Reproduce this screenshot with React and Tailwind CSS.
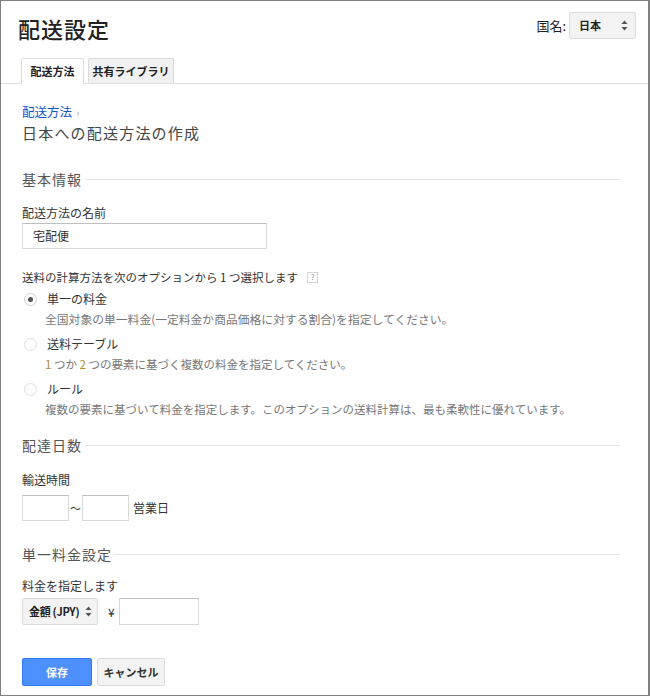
import React from "react";

const FONT = { fontFamily: '"Noto Sans CJK JP", "Noto Sans", sans-serif' };

function Arrows({ className = "" }) {
  return (
    <svg width="7" height="11" viewBox="0 0 7 11" className={className}>
      <path d="M3.5 0.5 L6.5 4 L0.5 4 Z" fill="#555" />
      <path d="M3.5 10.5 L6.5 7 L0.5 7 Z" fill="#555" />
    </svg>
  );
}

function Section({ title, className = "" }) {
  return (
    <div className={"flex items-center " + className}>
      <span className="text-[14px] leading-[20px] tracking-[1px] text-[#555]">{title}</span>
      <div className="ml-[3px] flex-1 border-t border-[#e5e5e5]" />
    </div>
  );
}

function Radio({ checked }) {
  return (
    <span
      className={
        "flex h-[13px] w-[13px] shrink-0 items-center justify-center rounded-full border bg-white " +
        (checked ? "border-[#d0d0d0]" : "border-[#e0e0e0]")
      }
    >
      {checked && <span className="h-[5px] w-[5px] rounded-full bg-[#555]" />}
    </span>
  );
}

function Option({ checked, label, desc, className = "", descClass = "text-[11.5px]" }) {
  return (
    <div className={className}>
      <div className="flex items-center">
        <span className="ml-[2px] flex w-[23px]">
          <Radio checked={checked} />
        </span>
        <span className="text-[12px] leading-[18px] text-[#333]">{label}</span>
      </div>
      <div className={"mt-[2px] pl-[23px] leading-[18px] text-[#777] " + descClass}>{desc}</div>
    </div>
  );
}

export default function App() {
  return (
    <div style={FONT} className="h-[696px] w-[650px] overflow-hidden border border-r-2 border-[#808080] bg-white text-[#333]">
      {/* Header */}
      <div className="border-b border-[#e0e0e0]">
        <div className="flex items-start justify-between pr-[12px] pt-[11px]">
          <h1 className="ml-[17px] mt-[2px] text-[22px] font-medium leading-[28px] tracking-[1px] text-[#222]">配送設定</h1>
          <div className="flex items-center">
            <span className="mr-[3px] text-[13px] leading-[27px] text-[#222]">国名:</span>
            <div className="flex h-[27px] w-[67px] items-center justify-between rounded-[2px] border border-[#dcdcdc] bg-[#f3f3f3] pl-[9px] pr-[7px]">
              <span className="text-[11px] font-bold text-[#222]">日本</span>
              <Arrows />
            </div>
          </div>
        </div>
        <div className="ml-[20px] mt-[16px] flex gap-[4px]">
          <div className="-mb-px flex h-[26px] w-[63px] items-center justify-center rounded-t-[2px] border border-b-0 border-[#dcdcdc] bg-white text-[11px] font-bold text-[#222]">
            配送方法
          </div>
          <div className="flex h-[25px] w-[86px] items-center justify-center rounded-t-[2px] border border-b-0 border-[#dcdcdc] bg-[#f1f1f1] text-[11px] font-bold text-[#222]">
            共有ライブラリ
          </div>
        </div>
      </div>

      {/* Body */}
      <div className="pl-[21px] pr-[28px] pt-[19px]">
        <div className="flex items-center text-[12.5px] leading-[18px]">
          <span className="text-[#1155cc]">配送方法</span>
          <span className="ml-[4px] text-[11px] text-[#aaa]">›</span>
        </div>
        <div className="mt-[1px] text-[15px] leading-[22px] tracking-[1.2px] text-[#444]">日本への配送方法の作成</div>

        <Section title="基本情報" className="mt-[25px]" />

        <div className="mt-[15px] text-[12px] leading-[18px] text-[#333]">配送方法の名前</div>
        <div className="mt-px flex h-[26px] w-[245px] items-center border border-[#d9d9d9] border-t-[#c0c0c0] pl-[10px] text-[12px] text-[#333]">
          宅配便
        </div>

        <div className="mt-[19px] flex items-center text-[11.5px] leading-[18px] text-[#333]">
          <span>送料の計算方法を次のオプションから 1 つ選択します</span>
          <span className="ml-[9px] flex h-[11px] w-[11px] items-center justify-center border border-[#d5d5d5] text-[8px] leading-none text-[#999]">
            ?
          </span>
        </div>

        <Option
          className="mt-[4px]"
          checked
          label="単一の料金"
          descClass="text-[11.8px]"
          desc="全国対象の単一料金(一定料金か商品価格に対する割合)を指定してください。"
        />
        <Option
          className="mt-[7px]"
          label="送料テーブル"
          desc={
            <>
              <span className="text-[#b08a2c]">1</span> つか <span className="text-[#b08a2c]">2</span> つの要素に基づく複数の料金を指定してください。
            </>
          }
        />
        <Option
          className="mt-[7px]"
          label="ルール"
          desc="複数の要素に基づいて料金を指定します。このオプションの送料計算は、最も柔軟性に優れています。"
        />

        <Section title="配達日数" className="mt-[17px]" />

        <div className="mt-[16px] text-[12px] leading-[18px] text-[#333]">輸送時間</div>
        <div className="mt-[6px] flex items-center">
          <div className="h-[26px] w-[47px] border border-[#d9d9d9] border-t-[#c0c0c0]" />
          <span className="mx-px text-[11px] text-[#333]">〜</span>
          <div className="h-[26px] w-[47px] border border-[#d9d9d9] border-t-[#c0c0c0]" />
          <span className="ml-[4px] text-[12px] text-[#333]">営業日</span>
        </div>

        <Section title="単一料金設定" className="mt-[23px]" />

        <div className="mt-[13px] text-[12px] leading-[18px] text-[#333]">料金を指定します</div>
        <div className="mt-[3px] flex items-center">
          <div className="flex h-[27px] w-[76px] items-center justify-between rounded-[2px] border border-[#dcdcdc] bg-[#f3f3f3] pl-[6px] pr-[5px]">
            <span className="text-[11px] font-bold tracking-[-0.3px] text-[#222]">金額 (JPY)</span>
            <Arrows />
          </div>
          <span className="ml-[10px] text-[12px] text-[#333]">¥</span>
          <div className="ml-[4px] h-[27px] w-[80px] border border-[#d9d9d9] border-t-[#c0c0c0]" />
        </div>

        <div className="mt-[33px] flex gap-[5px]">
          <div className="flex h-[28px] w-[70px] items-center justify-center rounded-[2px] border border-[#3079ed] bg-[#4d90fe] text-[11px] font-bold text-white">
            保存
          </div>
          <div className="flex h-[28px] w-[68px] items-center justify-center rounded-[2px] border border-[#dcdcdc] bg-[#f3f3f3] text-[11px] font-bold text-[#333]">
            キャンセル
          </div>
        </div>
      </div>
    </div>
  );
}
